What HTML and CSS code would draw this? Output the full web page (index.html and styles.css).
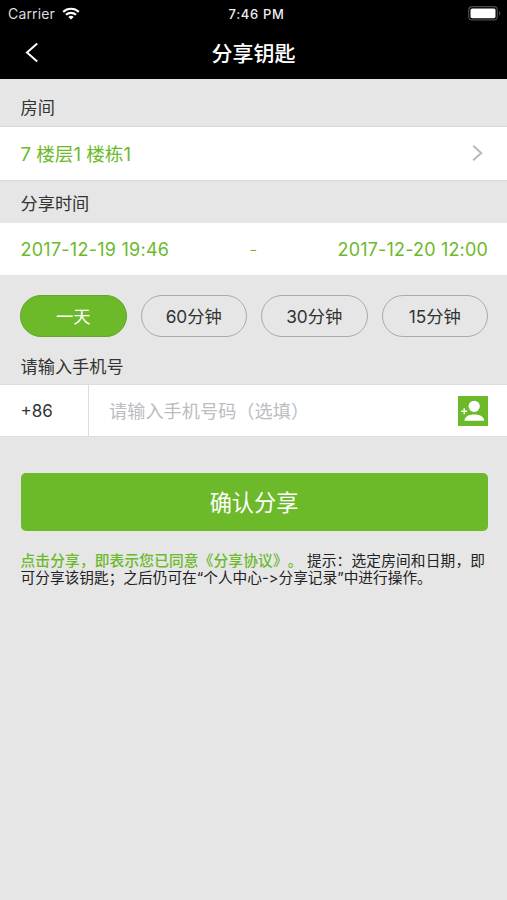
FILE: index.html
```html
<!DOCTYPE html>
<html lang="zh-CN">
<head>
<meta charset="utf-8">
<title>分享钥匙</title>
<link rel="stylesheet" href="styles.css">
</head>
<body>
<header class="header">
  <div class="status">
    <div class="carrier"><span>Carrier</span>
      <svg width="18" height="13" viewBox="0 0 18 13" fill="none" stroke="#fff" stroke-width="2.2"><path d="M1.2 4.9C5.5.7 12.5.7 16.8 4.9M4 7.8C6.8 5.1 11.2 5.1 14 7.8"/><path d="M9 12.6 6.3 9.9Q9 7.7 11.7 9.9Z" fill="#fff" stroke="none"/></svg>
    </div>
    <span class="clock">7:46 PM</span>
    <svg class="battery" width="33" height="15" viewBox="0 0 33 15"><rect x=".7" y=".7" width="28.6" height="13.2" rx="3.5" fill="none" stroke="#4b4b4b" stroke-width="1.2"/><rect x="2.5" y="2.5" width="25" height="9.7" rx="1.7" fill="#fff"/><path d="M31 5.2q1.3.7 1.3 2.1T31 9.4z" fill="#4b4b4b"/></svg>
  </div>
  <nav class="nav">
    <svg class="back" width="14" height="20" viewBox="0 0 14 20" fill="none" stroke="#fff" stroke-width="2"><path d="M12.2.5 2 9.5l10.2 9"/></svg>
    <h1 class="title">分享钥匙</h1>
  </nav>
</header>
<main>
  <h2 class="label label-room">房间</h2>
  <section class="row row-room">
    <span class="room">7 楼层1 楼栋1</span>
    <svg width="11" height="18" viewBox="0 0 11 18" fill="none" stroke="#b9b9bb" stroke-width="2"><path d="m1.2 1.7 8 7.3-8 7.3"/></svg>
  </section>
  <h2 class="label label-time">分享时间</h2>
  <section class="row row-time">
    <span class="date start">2017-12-19 19:46</span><span class="dash">-</span><span class="date">2017-12-20 12:00</span>
  </section>
  <div class="pills">
    <button class="pill active">一天</button>
    <button class="pill">60分钟</button>
    <button class="pill">30分钟</button>
    <button class="pill">15分钟</button>
  </div>
  <h2 class="label label-phone">请输入手机号</h2>
  <section class="phone">
    <span class="code">+86</span>
    <span class="placeholder">请输入手机号码（选填）</span>
    <svg class="contact" width="30" height="30" viewBox="0 0 30 30"><path fill="#6cb92a" d="M0 0h30v30H0z"/><g fill="#fff"><circle cx="16.2" cy="10.3" r="5.6"/><path d="M6.5 24.7c0-4.3 4.5-6.3 9.8-6.3s9.9 2 9.9 6.3z"/></g><path d="M3.2 15.2h6M6.2 12.2v6" stroke="#fff" stroke-width="1.4"/></svg>
  </section>
  <button class="submit">确认分享</button>
  <p class="note"><span class="line first"><span class="agree">点击分享，即表示您已同意《分享协议》。</span> 提示：选定房间和日期，即</span><span class="line second">可分享该钥匙；之后仍可在“个人中心-&gt;分享记录”中进行操作。</span></p>
</main>
</body>
</html>
```
FILE: styles.css
```css
* { box-sizing: border-box; }
body { margin: 0; min-height: 900px; background: #e6e6e6; color: #333; font-family: Inter, "Noto Sans CJK SC", sans-serif; text-spacing-trim: space-all; }
button { margin: 0; padding: 0; font-family: inherit; }
h1, h2, p { margin: 0; font-weight: 400; }
svg { display: block; flex: none; }
.header { height: 79px; background: #000; color: #fff; }
.status { display: grid; grid-template-columns: 1fr auto 1fr; align-items: center; height: 27px; padding: 0 6px 0 8px; }
.carrier { display: flex; align-items: center; gap: 7px; font-size: 14px; letter-spacing: .15px; color: #ddd; }
.clock { padding-left: 4px; font-size: 13px; font-weight: 500; letter-spacing: .65px; color: #eee; }
.battery { justify-self: end; }
.nav { display: grid; grid-template-columns: 1fr auto 1fr; align-items: center; height: 51px; padding: 0 25px; }
.title { grid-column: 2; padding-top: 2px; font-size: 21px; font-weight: 500; line-height: 30px; }
.label { padding-left: 20.5px; font-size: 17.2px; white-space: nowrap; }
.label-room { height: 47px; line-height: 58px; }
.label-time { height: 42px; line-height: 46px; }
.label-phone { height: 47px; line-height: 60px; }
.row { display: flex; align-items: center; justify-content: space-between; padding: 0 19px 0 20.5px; background: #fff; color: #6cb92a; border: solid #d9d9d9; border-width: 1px 0; }
.row-room { height: 55px; padding-right: 24px; padding-bottom: 1px; font-size: 18.6px; }
.room { padding-bottom: 2px; }
.row-time { height: 52px; border-width: 0; font-size: 18px; }
.date { letter-spacing: .17px; }
.start { letter-spacing: .25px; }
.dash { font-size: 18px; font-weight: 300; }
.pills { display: grid; grid-template-columns: repeat(4, 1fr); gap: 14px; padding: 20px 19px 0 20px; }
.pill { height: 42px; padding-bottom: 2px; border: 1px solid #aaa; border-radius: 21px; background: transparent; color: #333; font-size: 17.3px; }
.pill.active { background: #6cb92a; border-color: #62a52a; color: #fff; }
.phone { display: flex; align-items: center; height: 53px; padding-right: 19px; background: #fff; border: solid #dedede; border-width: 1px 0; }
.code { width: 89px; height: 100%; padding-left: 20.5px; border-right: 1px solid #ddd; font-size: 17px; line-height: 53px; }
.placeholder { flex: 1; padding: 0 0 2px 20px; font-size: 18.2px; color: #bcbcc2; white-space: nowrap; }
.submit { display: block; width: 467px; height: 58px; margin: 36px 0 0 20.5px; padding-bottom: 3px; border: 0; border-radius: 5px; background: #6cb92a; color: #fff; font-size: 22.2px; }
.note { margin: 22px 0 0 20.5px; color: #222; font-size: 14.7px; line-height: 17px; white-space: nowrap; font-feature-settings: "calt" 0; }
.line { display: block; }
.first { letter-spacing: .16px; }
.agree { color: #6cb92a; font-weight: 500; }
```
